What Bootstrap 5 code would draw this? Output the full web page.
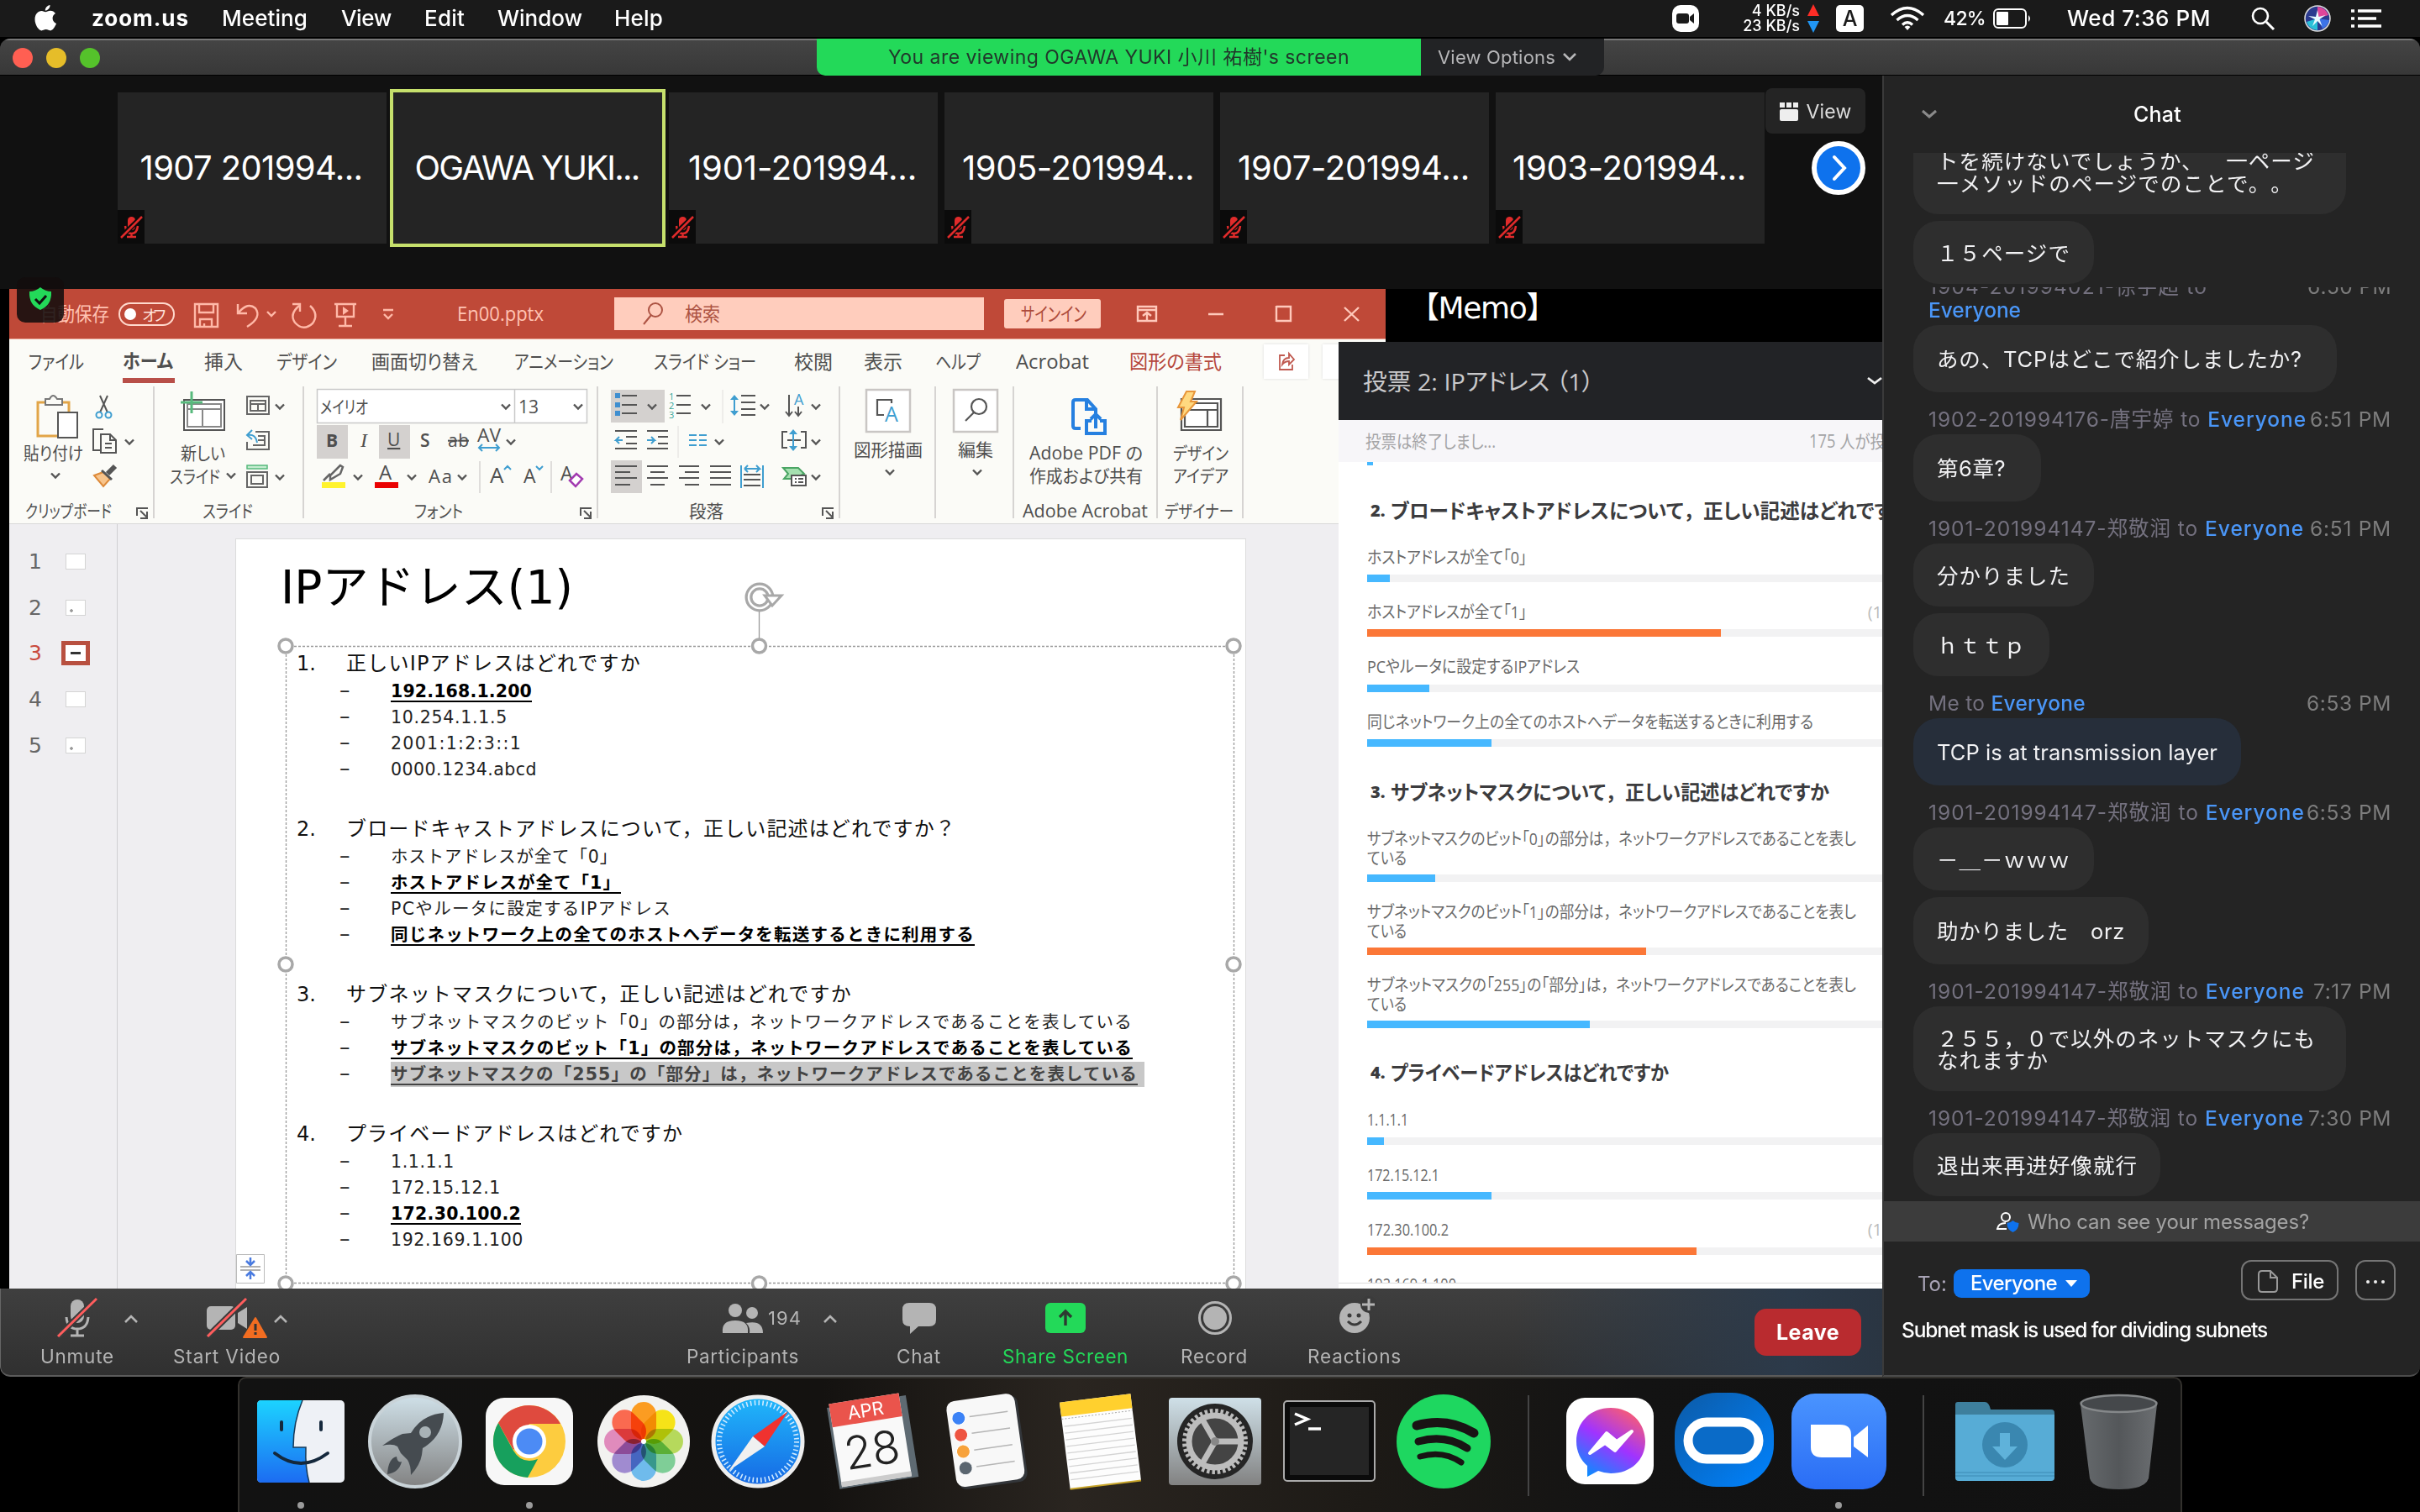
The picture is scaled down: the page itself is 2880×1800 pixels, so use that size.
<!DOCTYPE html>
<html lang="ja">
<head>
<meta charset="utf-8">
<title>Zoom Meeting</title>
<link rel="stylesheet" href="https://cdn.jsdelivr.net/npm/bootstrap@5.3.0/dist/css/bootstrap.min.css">
<style>
html,body{width:2880px;height:1800px;overflow:hidden}
body{background:#000;font-family:Inter,"Noto Sans CJK JP",sans-serif;font-size:25px;line-height:1;color:#fff;text-spacing-trim:space-all}
svg{display:block;overflow:visible}
[data-w]{display:inline-block;white-space:pre}
.squash{transform-origin:0 50%;font-feature-settings:"palt"}
.fullw{font-feature-settings:normal}
.grid-row{display:grid;align-items:center;white-space:nowrap}
/* menu bar */
.menu-bar{height:46px;background:#1a1a1a;border-bottom:2px solid #000;font-size:26px;font-weight:500;grid-template-columns:40px 69px 155px 142px 99px 87px 139px 1259px 46px 114px 35px 64px 64px 59px 88px 219px 63px 56px 40px}
.net-rate{font-size:18px;line-height:18px;text-align:right;width:106px}
.pct{font-size:23px}
/* window */
.zoom-window{height:1593px;background:#111;border-radius:12px 12px 12px 12px;overflow:hidden}
.title-strip{height:44px;background:linear-gradient(#444,#383838);border-top:2px solid #777;border-bottom:1px solid #000}
.lights{width:134px;padding-left:15px;gap:16px}
.lights i{width:24px;height:24px;border-radius:50%}
.share-info{width:719px;height:44px;margin:-2px 0 0 838px;background:#23d959;color:#21372b;font-size:23px;border-bottom-left-radius:10px}
.share-opt{width:218px;height:44px;margin-top:-2px;background:#222325;color:#b6b6b8;font-size:22px;border-bottom-right-radius:10px}
.stage-col{width:2240px}
.gallery{height:254px;background:#111;padding:20px 20px 0 140px}
.tile{width:320px;height:180px;background:#242424;font-size:40px;margin-right:8px;position:relative;flex:none}
.tile.talking{outline:4px solid #c6e06c;outline-offset:0}
.tile span{margin-left:-2px}
.tile svg{position:absolute;left:0;bottom:0;background:#0b0b0b}
.gallery-side{margin-left:-7px;margin-top:-5px;width:119px}
.view-btn{height:54px;background:#242424;border-radius:8px;color:#dcdcdc;font-size:23px;gap:10px;padding-top:2px}
.next-btn{width:64px;height:64px;border:6px solid #fff;border-radius:50%;background:#0e72ed;margin:9px 0 0 55px}
/* shared screen */
.shared{height:1190px;background:#000;padding-left:11px;position:relative}
.ppt{width:1638px;height:1190px;flex:none;font-family:"Open Sans","Noto Sans CJK JP",sans-serif;color:#4f4f4f}
.ppt-title{height:60px;background:#bf4938;border-bottom:1px solid #e9a393;color:#ffc3b3;font-size:23px;grid-template-columns:37px 93px 75px 328px 187px 464px 145px 1fr}
.switch{width:67px;height:28px;border:2px solid #ffd9cd;border-radius:14px;padding:0 9px 0 5px}
.switch i{width:14px;height:14px;border-radius:50%;background:#fff}
.switch b{font:400 18px "Noto Sans CJK JP";line-height:22px;color:#ffe4dc;letter-spacing:-6px;margin-right:4px}
.find-box{width:440px;height:39px;background:#ffcdbd;color:#ad5343;padding-left:34px;gap:26px}
.signin{width:115px;height:35px;background:#ffcdbd;color:#ad4b3b;border-radius:3px}
.tabs-row{height:56px;background:#fbfbf7;font-size:23px;grid-template-columns:23px 112px 97px 86px 113px 170px 166px 167px 83px 85px 96px 135px 160px 70px 1fr;padding-bottom:4px}
.tab-on{font-weight:700;border-bottom:6px solid #b84f48;height:52px;width:62px;display:flex;align-items:center;padding-top:5px}
.shape-tab{color:#b5473c}
.share-tab{width:53px;height:41px;background:#fff;box-shadow:0 0 3px #ddd;display:grid;place-items:center}
.ribbon{height:164px;background:#fbfbf7;border-bottom:1px solid #d8d8d8;font-size:21px}
.rgroup{border-right:2px solid #d6d4d2;height:157px;flex:none}
.rgroup .cap{height:26px;margin-top:6px;position:relative}
.rgroup text{fill:#4f4f4f;font-size:21px;font-feature-settings:"palt"}
.gc1{width:173px}.gc2{width:178px}.gc3{width:350px}.gc4{width:288px}.gc5{width:114px}.gc6{width:93px}.gc7{width:171px}.gc8{width:102px}
.cap .in1{margin-left:19px}.cap .in2{margin-left:57px}.cap .in3{margin-left:131px}.cap .in4{margin-left:108px}.cap .in7{margin-left:10px}.cap .in8{margin-left:8px}
.launcher{position:absolute;right:5px;top:6px}
.work{height:910px;background:#efeef1}
.thumbs{width:129px;border-right:1px solid #cfcfd2;padding:17px 0 0 23px;font:25px "DejaVu Sans";color:#666}
.thumb{height:54.8px;gap:28px}
.thumb i{width:24px;height:19px;background:#fff;border:1px solid #d4d4d4}
.thumb.dots i{background:radial-gradient(circle at 6px 12px,#999 1.500px,transparent 2px) #fff}
.thumb.sel{color:#c9493d}
.thumb.sel i{outline:5px solid #b85040;outline-offset:0;border:0;background:linear-gradient(#333,#333) center/12px 3px no-repeat #fff}
.slide{width:1203px;margin-left:140px;margin-top:17px;height:893px;background:#fff;border:1px solid #dcdcdc;border-bottom:0;position:relative;font-family:"DejaVu Sans","Noto Sans CJK JP",sans-serif;color:#111;overflow:hidden}
.slide h1{font-size:55px;margin:0;padding:24px 0 0 53px;height:130px;line-height:66px;font-weight:400;color:#000}
.slide .q{font-size:24px;line-height:36px;height:36px;padding-left:72px}
.slide .q span:first-child{display:inline-block;width:59px}
.slide .a{font-size:20.5px;line-height:31px;height:31px;padding-left:123px;color:#222}
.slide .a>i{font-style:normal;display:inline-block;width:61px;font-size:25px;line-height:28px;vertical-align:top}
.slide section{margin-bottom:37px}
.slide u{font-weight:700;color:#000;text-underline-offset:4px;text-decoration-thickness:2px}
.slide .hl{background:#c8c8c8;padding-right:8px;line-height:30px}
.slide .hl u{color:#444}
.frame{position:absolute;left:-1px;top:-1px}
.fit-btn{position:absolute;left:0;bottom:6px}
.guard{position:absolute;left:20px;top:-14px}
/* poll */
.memo{font:36px "DejaVu Sans","Noto Sans CJK JP";line-height:46px;height:63px;color:#fff;position:absolute;left:1677px;top:0;width:400px;overflow:hidden}
.poll{position:absolute;left:1593px;top:63px;width:647px;height:1127px;background:#fff;overflow:hidden;font-family:"Open Sans","Noto Sans CJK JP",sans-serif;color:#6a6a6a;white-space:nowrap}
.poll-head{height:93px;background:#222326;color:#c9c9cb;font-size:28px;padding:0 2px 0 29px}
.poll-sub{height:50px;background:#f7f6f9;color:#a4a4a6;font-size:21px;padding-left:32px;gap:373px}
.poll-body{padding-left:34px;height:978px;overflow:hidden;border-bottom:1px solid #ddd}
.peek{width:7px;height:4px;background:#46b8ff;margin-bottom:23.500px}
.poll h2{margin:0;height:74px;line-height:60px;font-size:24px;font-weight:700;color:#3c3c3e;padding-left:4px;display:grid;grid-template-columns:24px 1fr}
.poll h2 b{font-size:20px}
.opt{margin-bottom:23.850px;font-size:20px;line-height:23px}
.opt .rowl{padding-bottom:9.5px;height:32.5px}
.opt.two .rowl{height:54px}
.opt .n{color:#bbb}
.opt .progress{height:9px;border-radius:0;background:#f2f2f3}
.opt .progress-bar{background:#46b8ff}
.opt .hit{background:#fb7737}
/* toolbar */
.ctl-bar{height:105px;background:linear-gradient(90deg,transparent 1800px,#2c3a4a 2130px,#2a3542),linear-gradient(#3f3f3f,#303030);border-bottom:2px solid #5b5b5b;border-left:1px solid #666;color:#b4b4b4;font-size:22.5px;border-bottom-left-radius:12px}
.ctl{display:flex;flex-direction:column;height:103px;padding-top:12px}
.ctl svg{height:46px;margin-bottom:12px}
.c1{margin-left:47px;width:158px}.c2{width:611px}.c3{width:250px}.c4{width:126px}.c5{width:212px;color:#23d959}.c6{width:151px}.c7{width:532px}
.leave{width:127px;height:56px;background:#b92b2f;border-radius:14px;font-size:25px;font-weight:700;color:#fff;padding-top:2px}
/* chat */
.chat{width:640px;background:#242424;border-left:2px solid #3a3a3a;position:relative;height:1549px;padding-left:35px;border-bottom:2px solid #4b4b4b;border-bottom-right-radius:12px}
.chat-head{height:92px;font-size:25px;font-weight:500;padding-left:10px}
.chat-head .t{margin-left:234px}
.chat-list{height:1248px;overflow:hidden;font-size:25.5px}
.bub{background:#2e2e2e;border-radius:30px;padding:3px 0 0 28px;display:flex;align-items:center;line-height:26.5px;color:#f2f2f4}
.bub.me{background:#262e3a}
.bub.cut{height:73px;border-radius:0 0 30px 30px;align-items:flex-start;padding-top:0;overflow:hidden}
.bub.cut div{margin-top:-3px}
.h75{height:75px}.h80{height:80px}.h101{height:101px}
.w152{width:152px}.w162{width:162px}.w215{width:215px}.w280{width:280px}.w294{width:294px}.w390{width:390px}.w504{width:504px}.w515{width:515px}
.g8{margin-top:8px}
.who{height:50px;padding:0 34px 4px 18px;line-height:28px;color:#74717f;font-size:24.5px}
.who em{font-style:normal;color:#4a96f7;font-weight:500}
.who time{color:#7d7d7d}
.who.clip{height:49px;overflow:hidden;align-items:flex-start!important;padding-bottom:0;border-top:4px solid #242424}
.who.clip>*{margin-top:-15px}
.privacy{height:48px;margin-left:-35px;background:#3c3c3c;color:#a3a3a3;font-size:24px;gap:10px;padding:2px 0 0 2px}
.to-row{height:49px;margin-top:22px;padding-right:27px}
.to-row .to{width:43px;margin-left:5px;color:#a9a4b6;font-size:24px;padding-top:8px}
.to-row .ev{width:162px;height:34px;background:#0e72ed;border-radius:9px;font-size:24px;margin-top:11px;font-weight:500;gap:10px;padding:0 15px 0 20px}
.to-row .ghost{border:2px solid #757575;border-radius:12px;height:48px;padding-top:3px!important}
.to-row .file{width:116px;margin-left:180px;font-size:24px;font-weight:500;padding:0 15px 0 18px}
.to-row .more{width:48px;margin-left:20px}
.typed{margin:20px 0 0 -14px;font-size:24.5px;line-height:28px;font-weight:500}
/* dock */
.dock{width:2314px;height:161px;margin-left:283px;background:linear-gradient(90deg,#121212,#141210 30%,#2a2520 43%,#1d1a16 58%,#131313 72%,#111);border:2px solid #33312d;border-bottom:0;border-radius:10px 10px 0 0;padding-left:5px}
.slot{width:136px;height:160px;flex:none;margin-top:-1px}
.petals rect{mix-blend-mode:multiply}
.petals{isolation:isolate}
.sep{width:62px;flex:none;display:grid;place-items:center;padding-left:3px}
.sep i{width:2px;height:120px;background:#444}
</style>
</head>
<body>
<svg width="0" height="0" class="position-absolute">
<symbol id="muted" viewBox="0 0 32 40"><rect x="12" y="8" width="9" height="16" rx="4.5" fill="#e02b2b"/><path d="M9 19q1 9 7.500 9t7.500-9M16.500 28v3M11 32h11" stroke="#e02b2b" stroke-width="2.500" fill="none"/><path d="M3 33 29 8" stroke="#0b0b0b" stroke-width="6"/><path d="M4 33 29 8" stroke="#e02b2b" stroke-width="2.500"/></symbol>
<symbol id="launch" viewBox="0 0 15 14"><path d="M1 10V1h13M5 4l8 8M13 5v8H5" fill="none" stroke="#555" stroke-width="2"/></symbol>
<g id="cv"><path d="M-5-2.500 0 2.500 5-2.500" fill="none" stroke="#555" stroke-width="2.400"/></g>
<linearGradient id="gf" x2="0" y2="1"><stop stop-color="#1cd3ff"/><stop offset="1" stop-color="#1c6cf2"/></linearGradient>
<linearGradient id="gg" x2="0" y2="1"><stop stop-color="#cfe0e8"/><stop offset="1" stop-color="#828282"/></linearGradient>
<linearGradient id="gs" x2="0" y2="1"><stop stop-color="#20b8fb"/><stop offset="1" stop-color="#1668e4"/></linearGradient>
<linearGradient id="gz" x2="0" y2="1"><stop stop-color="#4a94ff"/><stop offset="1" stop-color="#2a6df5"/></linearGradient>
<linearGradient id="gm" x1=".2" y1="1" x2=".8" y2="0"><stop stop-color="#0a8cff"/><stop offset=".5" stop-color="#a033ff"/><stop offset="1" stop-color="#ff5f6b"/></linearGradient>
<linearGradient id="go" x1="0" y1="0" x2="1" y2="1"><stop stop-color="#0c5aa6"/><stop offset="1" stop-color="#0083ff"/></linearGradient>
<linearGradient id="gt" x2="1" y2="0"><stop stop-color="#666a6d"/><stop offset=".5" stop-color="#54575a"/><stop offset="1" stop-color="#6b6e71"/></linearGradient>
</svg>

<nav class="menu-bar grid-row">
<span></span>
<svg width="28" height="34" viewBox="0 0 28 34"><path d="M19.500 1c.4 3-2.600 6.700-5.700 6.600C13.500 4.700 16.500 1.400 19.500 1zM14.200 9.300c1.500 0 3-1.500 5.800-1.500 2.300 0 4.600 1.200 6 3.300-5 3-4.300 9.800 1 12-1.400 3.700-4.200 8.300-7 8.300-2 0-2.700-1.300-5.300-1.300s-3.400 1.300-5.200 1.300C6 31.400 1.500 24.500 1.500 18c0-6.300 4-10 8-10 2 0 3.500 1.300 4.700 1.300z" fill="#fff"/></svg>
<b data-w="116">zoom.us</b><span data-w="102">Meeting</span><span data-w="60">View</span><span data-w="48">Edit</span><span data-w="101">Window</span><span data-w="58">Help</span>
<svg width="32" height="32" viewBox="0 0 32 32"><rect width="32" height="32" rx="10" fill="#fff"/><rect x="5" y="10" width="15" height="12" rx="3" fill="#1a1a1a"/><path d="M21 14l5-4v12l-5-4z" fill="#1a1a1a"/></svg>
<div class="net-rate"><div>4 KB/s</div><div>23 KB/s</div></div>
<svg width="16" height="36" viewBox="0 0 16 36"><path d="M8 1 15 15H1z" fill="#ff2d26"/><path d="M8 35 15 21H1z" fill="#2196f3"/></svg>
<svg width="33" height="32" viewBox="0 0 33 32"><rect width="33" height="32" rx="5" fill="#fff"/><text x="16.500" y="25" font-size="25" text-anchor="middle" fill="#1a1a1a">A</text></svg>
<svg width="42" height="30" viewBox="0 0 42 30"><g fill="none" stroke="#fff" stroke-width="3.400"><path d="M2 11q19-17 38 0M8.500 17q12.500-11 25 0M15 22.500q6-5.500 12 0"/></g><path d="M17.500 25q3.500-3 7 0L21 29z" fill="#fff"/></svg>
<span data-w="50" class="pct">42%</span>
<svg width="46" height="24" viewBox="0 0 46 24"><rect x="1" y="1" width="38" height="22" rx="5" fill="none" stroke="#fff" stroke-width="2"/><rect x="4" y="4" width="14" height="16" rx="1" fill="#fff"/><path d="M42 8q4 4 0 8z" fill="#fff"/></svg>
<span data-w="171">Wed 7:36 PM</span>
<svg width="28" height="28" viewBox="0 0 28 28"><circle cx="11" cy="11" r="9" fill="none" stroke="#fff" stroke-width="2.600"/><path d="M18 18l9 9" stroke="#fff" stroke-width="3"/></svg>
<svg width="32" height="32" viewBox="0 0 32 32"><circle cx="16" cy="16" r="15" fill="#2b3a8f" stroke="#ddd" stroke-width="1.500"/><path d="M16 2a14 14 0 0 1 13 10L16 16z" fill="#e0469a"/><path d="M3 20a14 14 0 0 0 13 10V16z" fill="#29c0d8"/><path d="M16 16 30 18a14 14 0 0 1-8 10z" fill="#3c73e8"/><path d="M16 6l1.500 8 8-2-7 5 3 8-5.500-6-6 6 3-8-8-4 9 1z" fill="#e9fbff"/></svg>
<svg width="36" height="22" viewBox="0 0 36 22"><path d="M8 2h28M8 11h22M8 20h28M0 2h4M0 11h4M0 20h4" stroke="#fff" stroke-width="3.400"/></svg>
</nav>

<main class="zoom-window">
<header class="title-strip d-flex">
<div class="lights d-flex align-items-center"><i style="background:#ff5f52"></i><i style="background:#e6bd29"></i><i style="background:#55c22b"></i></div>
<div class="share-info d-flex align-items-center justify-content-center"><span data-w="549">You are viewing OGAWA YUKI 小川 祐樹's screen</span></div>
<div class="share-opt d-flex align-items-center ps-3"><span data-w="140" class="ms-1">View Options</span><svg width="18" height="12" viewBox="0 0 18 12" class="ms-2"><path d="M2 2l7 7 7-7" fill="none" stroke="#b6b6b8" stroke-width="2.600"/></svg></div>
</header>
<div class="d-flex">
<div class="stage-col">
<div class="gallery d-flex">
<div class="tile d-flex align-items-center justify-content-center"><span data-w="265">1907 201994...</span><svg width="32" height="40"><use href="#muted"/></svg></div>
<div class="tile talking d-flex align-items-center justify-content-center"><span data-w="267">OGAWA YUKI...</span></div>
<div class="tile d-flex align-items-center justify-content-center"><span data-w="272">1901-201994...</span><svg width="32" height="40"><use href="#muted"/></svg></div>
<div class="tile d-flex align-items-center justify-content-center"><span data-w="276">1905-201994...</span><svg width="32" height="40"><use href="#muted"/></svg></div>
<div class="tile d-flex align-items-center justify-content-center"><span data-w="276">1907-201994...</span><svg width="32" height="40"><use href="#muted"/></svg></div>
<div class="tile d-flex align-items-center justify-content-center"><span data-w="278">1903-201994...</span><svg width="32" height="40"><use href="#muted"/></svg></div>
<div class="gallery-side position-relative">
<div class="view-btn d-flex align-items-center justify-content-center"><svg width="22" height="22" viewBox="0 0 22 22"><path d="M0 0h6v6H0zM8 0h6v6H8zM16 0h6v6h-6z" fill="#eee"/><rect y="8" width="22" height="14" rx="2" fill="#eee"/></svg><span data-w="54">View</span></div>
<div class="next-btn d-grid"><svg width="52" height="52" viewBox="0 0 52 52"><path d="M21 13l12 13-12 13" fill="none" stroke="#fff" stroke-width="4" stroke-linecap="round"/></svg></div>
</div>
</div>

<div class="shared d-flex">
<div class="ppt">
<div class="ppt-title grid-row">
<span></span><span class="squash" data-w="82">自動保存</span>
<div class="switch d-flex align-items-center justify-content-between"><i></i><b>オフ</b></div>
<svg width="250" height="40" viewBox="216 354 250 40"><g fill="none" stroke="#ffb9a8" stroke-width="2.400"><path d="M232 362h27v27h-27zM237 362v10h17v-10M238 389v-9h14v9M243 389v-4"/><path d="M283 362v11h11M284 372q11-13 20-5 8 11-10 22"/><path d="M318 371l5 5 5-5"/><path d="M356 364q-12 10-5 20 10 11 21 1 8-11-3-21M348 362h9v9"/><path d="M398 362h26M401 363v14h20v-14M411 378v9M403 388h16"/><path d="M456 369h12M457 374l5 5 5-5"/></g><path d="M408 365l7 5-7 5z" fill="#ffb9a8"/></svg>
<span data-w="103" class="squash">En00.pptx</span>
<div class="find-box d-flex align-items-center"><svg width="24" height="28" viewBox="0 0 24 28"><circle cx="15" cy="9" r="8" fill="none" stroke="#ad5343" stroke-width="2"/><path d="M10 15 1 26" stroke="#ad5343" stroke-width="2"/></svg><span class="squash" data-w="42">検索</span></div>
<div class="signin d-flex align-items-center ps-3"><span class="squash ms-1" data-w="78">サインイン</span></div>
<svg width="290" height="30" viewBox="1341 359 290 30"><g fill="none" stroke="#ffc9bb" stroke-width="2.400"><path d="M1355 365h22v17h-22zM1355 369h22M1366 381v-8M1361 376l5-4 5 4"/><path d="M1439 374h18M1520 365h17v17h-17M1520 364v19M1601 366l17 16M1618 366l-17 16"/></g></svg>
</div>
<div class="tabs-row grid-row">
<span></span><span><span class="squash" data-w="66">ファイル</span></span><span class="tab-on"><span class="squash" data-w="60">ホーム</span></span><span class="squash" data-w="46">挿入</span><span class="squash" data-w="72">デザイン</span><span class="squash" data-w="126">画面切り替え</span><span class="squash" data-w="118">アニメーション</span><span class="squash" data-w="122">スライド ショー</span><span class="squash" data-w="46">校閲</span><span class="squash" data-w="46">表示</span><span class="squash" data-w="54">ヘルプ</span><span class="squash" data-w="87">Acrobat</span><span class="squash shape-tab" data-w="110">図形の書式</span>
<div class="share-tab"><svg width="20" height="22" viewBox="0 0 20 22"><path d="M8 4H2v17h15v-6M5 15Q6 7 13 7V2l6 7-6 6v-4q-5 0-8 4z" fill="none" stroke="#c05a50" stroke-width="1.800"/></svg></div><div class="share-tab"></div>
</div>
<div class="ribbon d-flex">
<div class="rgroup gc1"><svg width="171" height="132" viewBox="11 460 171 132"><path d="M45 479h37v40H45z" fill="none" stroke="#e2a548" stroke-width="3"/><path d="M54 482v-7h5q4-8 9 0h6v7z" fill="#fbfbf7" stroke="#777" stroke-width="2"/><path d="M69 491h23v30H69z" fill="#fff" stroke="#555" stroke-width="2"/><path d="M119 471l9 20M128 471l-9 20" stroke="#555" stroke-width="2"/><g fill="none" stroke="#3f9ed0" stroke-width="2"><circle cx="118" cy="494" r="3.500"/><circle cx="129" cy="494" r="3.500"/></g><path d="M123 511h-12v25h8M120 517h11l7 7v15h-18zM131 517v7h7M125 528h8M125 533h8" fill="none" stroke="#555" stroke-width="2"/><path d="M137 555l-9 9" stroke="#555" stroke-width="6"/><path d="M112 566l11-4 8 8-8 9z" fill="#f8c48b" stroke="#dd8a3a" stroke-width="2"/><path d="M121 560l12 11" stroke="#555" stroke-width="3"/><use href="#cv" x="154" y="526"/><use href="#cv" x="66" y="566"/><text x="28" y="547" textLength="71" lengthAdjust="spacingAndGlyphs">貼り付け</text></svg><div class="cap"><span class="squash in1" data-w="103">クリップボード</span><svg class="launcher" width="15" height="14"><use href="#launch"/></svg></div></div>
<div class="rgroup gc2"><svg width="176" height="132" viewBox="184 460 176 132"><path d="M219 476h48v36h-48z" fill="#fff" stroke="#555" stroke-width="2"/><path d="M223 481h40v27h-40zM223 487h40M241 487v21" fill="none" stroke="#888" stroke-width="2"/><path d="M228 466v26M215 479h26" stroke="#57b97c" stroke-width="3"/><g fill="none" stroke="#666" stroke-width="2"><path d="M294 472h26v21h-26zM298 477h18v12h-18zM298 481h18M307 481v8"/><path d="M304 514h16v21h-26v-9M301 530h14v-11h-8M307 524h8"/><path d="M294 562h24v18h-24zM299 566h14v10h-14z"/></g><path d="M294 554h24v4h-24z" fill="#c5ecd0" stroke="#57b97c" stroke-width="1.500"/><path d="M295 518q9-2 11 9M300 512l-6 6 6 5" fill="none" stroke="#3f9ed0" stroke-width="2"/><use href="#cv" x="333" y="484"/><use href="#cv" x="333" y="568"/><use href="#cv" x="275" y="566"/><text x="215" y="547" textLength="53" lengthAdjust="spacingAndGlyphs">新しい</text><text x="202" y="575" textLength="60" lengthAdjust="spacingAndGlyphs">スライド</text></svg><div class="cap"><span class="squash in2" data-w="60">スライド</span></div></div>
<div class="rgroup gc3"><svg width="348" height="132" viewBox="362 460 348 132"><path d="M377.500 463.500h321v40h-321zM612.500 463v40" fill="#fff" stroke="#c9c9c9" stroke-width="1.500"/><text x="381" y="492" textLength="57" lengthAdjust="spacingAndGlyphs">メイリオ</text><text x="617" y="492" textLength="24" lengthAdjust="spacingAndGlyphs">13</text><use href="#cv" x="602" y="484"/><use href="#cv" x="688" y="484"/><path d="M377 506h37v40h-37zM451 506h37v40h-37z" fill="#d4d1cf"/><text x="388" y="532" font-weight="700">B</text><text x="429" y="532" font-style="italic" font-family="Liberation Serif" style="font-size:24px">I</text><text x="461" y="531" text-decoration="underline">U</text><text x="500" y="532" font-weight="600">S</text><text x="533" y="532" textLength="25" text-decoration="line-through">ab</text><text x="568" y="526" textLength="28" lengthAdjust="spacingAndGlyphs">AV</text><path d="M570 533h24M574 529l-4 4 4 4M590 529l4 4-4 4" fill="none" stroke="#3f9ed0" stroke-width="2"/><use href="#cv" x="608" y="526"/><path d="M383 574h28v7h-28z" fill="#fff32e"/><path d="M405 554l-12 12v5l12-7 3-8zM393 564l-8 8" fill="#fbfbf7" stroke="#666" stroke-width="2.500"/><use href="#cv" x="426" y="568"/><text x="451" y="571" style="font-size:24px">A</text><path d="M446 574h28v7h-28z" fill="#ea0202"/><use href="#cv" x="490" y="568"/><text x="510" y="575" style="font-size:22px" textLength="28">Aa</text><use href="#cv" x="550" y="568"/><path d="M571 549v38M656 549v38" stroke="#d6d4d2" stroke-width="1.500"/><text x="583" y="575" style="font-size:26px">A</text><text x="623" y="575" style="font-size:23px">A</text><text x="667" y="572" style="font-size:23px">A</text><path d="M600 559l4-4 4 4M638 555l4 4 4-4" fill="none" stroke="#3f9ed0" stroke-width="2"/><path d="M678 572l8-8 7 6-8 9z" fill="#fff" stroke="#a23bb0" stroke-width="2.500"/></svg><div class="cap"><span class="squash in3" data-w="58">フォント</span><svg class="launcher" width="15" height="14"><use href="#launch"/></svg></div></div>
<div class="rgroup gc4"><svg width="286" height="132" viewBox="712 460 286 132"><path d="M727 464h64v39h-64zM727 548h37v39h-37z" fill="#d4d1cf"/><g stroke="#555" stroke-width="2" fill="none"><path d="M740 471h18M740 482h18M740 492h18M805 471h17M805 482h17M805 492h17M882 471h17M882 479h17M882 487h17M882 494h17M939 470v24M935 490l4 5 4-5M950 484v11M946 490l4 5 4-5"/><path d="M732 513h26M745 520h13M745 528h13M732 534h26M770 513h25M783 520h12M783 528h12M770 534h25"/><path d="M732 555h26M732 562h18M732 569h26M732 577h18M770 555h25M774 562h17M770 569h25M774 577h17M808 555h24M815 562h17M808 569h24M815 577h17M845 555h25M845 562h25M845 569h25M845 577h25M885 565h20M885 571h20M885 578h20"/><path d="M937 514h-6v19h6M953 514h6v19h-6M937 524h16"/></g><path d="M732 468h6v6h-6zM732 479h6v6h-6zM732 489h6v6h-6z" fill="#3f8fd0"/><path d="M874 470l5 6h-10zM874 495l5-6h-10zM944 511l5 6h-10zM944 537l5-6h-10z" fill="#3f9ed0"/><path d="M874 473v20M944 515v20M741 524h-8l4-4M733 524l4 4M770 524h9l-4-4M779 524l-4 4M820 518h9M820 524h9M820 530h9M832 518h9M832 524h9M832 530h9M882 554v27M908 554v27M886 558h18l-4-4M904 558l-4 4M886 558l4-4M886 558l4 4" fill="none" stroke="#3f9ed0" stroke-width="2"/><text x="796" y="476" style="font-size:11px;fill:#3aa79a">1</text><text x="796" y="487" style="font-size:11px;fill:#3aa79a">2</text><text x="796" y="498" style="font-size:11px;fill:#3aa79a">3</text><text x="945" y="482" style="font-size:18px;fill:#3f9ed0">A</text><path d="M932 557h18l7 7-12 6h-12l5-6z" fill="#a5e0b0" stroke="#4aa564" stroke-width="2"/><path d="M942 566h17v12h-17zM946 570h2M950 570h6M946 574h2M950 574h6" fill="#fff" stroke="#555" stroke-width="2"/><use href="#cv" x="776" y="484"/><use href="#cv" x="840" y="484"/><use href="#cv" x="910" y="484"/><use href="#cv" x="971" y="484"/><use href="#cv" x="856" y="526"/><use href="#cv" x="971" y="526"/><use href="#cv" x="971" y="568"/><path d="M860 464v40M807 507v38" stroke="#e0dedc"/></svg><div class="cap"><span class="squash in4" data-w="41">段落</span><svg class="launcher" width="15" height="14"><use href="#launch"/></svg></div></div>
<div class="rgroup gc5"><svg width="112" height="132" viewBox="1000 460 112 132"><path d="M1031 464h52v50h-52z" fill="#fff" stroke="#c9c6c4" stroke-width="2.500"/><path d="M1061 480v-4h-17v18h8" fill="none" stroke="#555" stroke-width="2.200"/><text x="1053" y="502" style="font-size:25px;fill:#3f9ed0">A</text><text x="1016" y="543" textLength="82" lengthAdjust="spacingAndGlyphs">図形描画</text><use href="#cv" x="1059" y="562"/></svg></div>
<div class="rgroup gc6"><svg width="91" height="132" viewBox="1114 460 91 132"><path d="M1135 464h52v50h-52z" fill="#fff" stroke="#c9c6c4" stroke-width="2.500"/><circle cx="1165" cy="484" r="9" fill="none" stroke="#555" stroke-width="2.200"/><path d="M1159 491l-10 10" stroke="#555" stroke-width="2.200"/><text x="1140" y="543" textLength="42" lengthAdjust="spacingAndGlyphs">編集</text><use href="#cv" x="1163" y="562"/></svg></div>
<div class="rgroup gc7"><svg width="169" height="132" viewBox="1207 460 169 132"><path d="M1286 510h-6q-3 0-3-3v-28q0-3 3-3h14l10 11v5M1293 476v11h11M1299 501h-6v15h22v-15h-6M1304 510v-16M1298 499l6-6 6 6" fill="none" stroke="#2680e0" stroke-width="4"/><text x="1225" y="547" textLength="135" lengthAdjust="spacingAndGlyphs">Adobe PDF の</text><text x="1225" y="574" textLength="135" lengthAdjust="spacingAndGlyphs">作成および共有</text></svg><div class="cap"><span class="squash in7" data-w="149">Adobe Acrobat</span></div></div>
<div class="rgroup gc8"><svg width="100" height="132" viewBox="1378 460 100 132"><path d="M1406 475h47v37h-47zM1410 480h39v28h-39zM1410 488h39M1437 488v20" fill="#fff" stroke="#555" stroke-width="2.200"/><path d="M1412 466h10l-5 12h7l-19 22 4-15h-7z" fill="#ffd980" stroke="#e8963a" stroke-width="2"/><text x="1396" y="547" textLength="66" lengthAdjust="spacingAndGlyphs">デザイン</text><text x="1396" y="574" textLength="66" lengthAdjust="spacingAndGlyphs">アイデア</text></svg><div class="cap"><span class="squash in8" data-w="82">デザイナー</span></div></div>
</div>
<div class="work d-flex">
<div class="thumbs"><div class="thumb d-flex align-items-center">1<i></i></div><div class="thumb dots d-flex align-items-center">2<i></i></div><div class="thumb sel d-flex align-items-center">3<i></i></div><div class="thumb d-flex align-items-center">4<i></i></div><div class="thumb dots d-flex align-items-center">5<i></i></div></div>
<article class="slide">
<h1><span data-w="348">IPアドレス(1)</span></h1>
<section><div class="q"><span>1.</span><span data-w="351">正しいIPアドレスはどれですか</span></div>
<div class="a"><i>–</i><u data-w="168">192.168.1.200</u></div><div class="a"><i>–</i><span data-w="139">10.254.1.1.5</span></div><div class="a"><i>–</i><span data-w="156">2001:1:2:3::1</span></div><div class="a"><i>–</i><span data-w="174">0000.1234.abcd</span></div></section>
<section><div class="q"><span>2.</span><span data-w="726">ブロードキャストアドレスについて，正しい記述はどれですか？</span></div>
<div class="a"><i>–</i><span data-w="270">ホストアドレスが全て「0」</span></div><div class="a"><i>–</i><u data-w="274">ホストアドレスが全て「1」</u></div><div class="a"><i>–</i><span data-w="334">PCやルータに設定するIPアドレス</span></div><div class="a"><i>–</i><u data-w="695">同じネットワーク上の全てのホストへデータを転送するときに利用する</u></div></section>
<section><div class="q"><span>3.</span><span data-w="602">サブネットマスクについて，正しい記述はどれですか</span></div>
<div class="a"><i>–</i><span data-w="883">サブネットマスクのビット「0」の部分は，ネットワークアドレスであることを表している</span></div><div class="a"><i>–</i><u data-w="883">サブネットマスクのビット「1」の部分は，ネットワークアドレスであることを表している</u></div><div class="a"><i>–</i><span class="hl d-inline-block"><u data-w="889">サブネットマスクの「255」の「部分」は，ネットワークアドレスであることを表している</u></span></div></section>
<section><div class="q"><span>4.</span><span data-w="401">プライベードアドレスはどれですか</span></div>
<div class="a"><i>–</i><span data-w="76">1.1.1.1</span></div><div class="a"><i>–</i><span data-w="131">172.15.12.1</span></div><div class="a"><i>–</i><u data-w="155">172.30.100.2</u></div><div class="a"><i>–</i><span data-w="158">192.169.1.100</span></div></section>
<svg class="frame" width="1203" height="893" viewBox="280 641 1203 893"><g fill="none" stroke="#999" stroke-width="1.300"><path d="M340 769.500h1128M340.500 769v759M1468.500 769v759M340 1527.500h1128" stroke-dasharray="3 2"/><path d="M903.500 728v32"/></g><g fill="#fff" stroke="#a8a8a8" stroke-width="3.500"><circle cx="340" cy="769" r="8"/><circle cx="903.500" cy="769" r="8"/><circle cx="1468" cy="769" r="8"/><circle cx="340" cy="1148" r="8"/><circle cx="1468" cy="1148" r="8"/><circle cx="340" cy="1528" r="8"/><circle cx="903.500" cy="1528" r="8"/><circle cx="1468" cy="1528" r="8"/></g><g fill="none" stroke="#a8a8a8"><circle cx="904" cy="711" r="13" stroke-width="9"/><circle cx="904" cy="711" r="13" stroke="#fff" stroke-width="2.500"/><path d="M910 709h20l-11 12z" fill="#fff" stroke-width="3"/></g></svg>
<svg class="fit-btn" width="34" height="35" viewBox="0 0 34 35"><path d="M.5.500h33v34H.5z" fill="#fff" stroke="#bbb"/><path d="M5 15h24M5 19h24" stroke="#999" stroke-width="1.500"/><path d="M17 4v8M12 8l5 5 5-5M17 30v-8M12 26l5-5 5 5" fill="none" stroke="#4a7be0" stroke-width="2.500"/></svg>
</article>
</div>
</div>
<div class="memo"><span data-w="174">【Memo】</span></div>
<div class="poll">
<div class="poll-head d-flex align-items-center justify-content-between"><span class="squash" data-w="275">投票 2: IPアドレス （1）</span><svg width="16" height="12" viewBox="0 0 16 12"><path d="M1 2l8 6 8-6" fill="none" stroke="#eee" stroke-width="2.800"/></svg></div>
<div class="poll-sub d-flex align-items-center"><span class="squash" data-w="155">投票は終了しまし...</span><span class="squash" data-w="109">175 人が投票</span></div>
<div class="poll-body">
<div class="peek"></div>
<h2><b>2.</b><span><span class="squash" data-w="620">ブロードキャストアドレスについて<span class="fullw">，</span>正しい記述はどれですか</span></span></h2>
<div class="opt"><div class="rowl"><span class="squash" data-w="190">ホストアドレスが全て「0」</span></div><div class="progress"><div class="progress-bar" style="width:27px"></div></div></div>
<div class="opt"><div class="rowl d-flex"><span class="squash" data-w="190">ホストアドレスが全て「1」</span><span class="n ms-auto">(1</span></div><div class="progress"><div class="progress-bar hit" style="width:421px"></div></div></div>
<div class="opt"><div class="rowl"><span class="squash" data-w="253">PCやルータに設定するIPアドレス</span></div><div class="progress"><div class="progress-bar" style="width:74px"></div></div></div>
<div class="opt"><div class="rowl"><span class="squash" data-w="531">同じネットワーク上の全てのホストへデータを転送するときに利用する</span></div><div class="progress"><div class="progress-bar" style="width:148px"></div></div></div>
<h2><b>3.</b><span><span class="squash" data-w="522">サブネットマスクについて<span class="fullw">，</span>正しい記述はどれですか</span></span></h2>
<div class="opt two"><div class="rowl"><span class="squash" data-w="582">サブネットマスクのビット「0」の部分は<span class="fullw">，</span>ネットワークアドレスであることを表し</span><br><span class="squash" data-w="47">ている</span></div><div class="progress"><div class="progress-bar" style="width:81px"></div></div></div>
<div class="opt two"><div class="rowl"><span class="squash" data-w="582">サブネットマスクのビット「1」の部分は<span class="fullw">，</span>ネットワークアドレスであることを表し</span><br><span class="squash" data-w="47">ている</span></div><div class="progress"><div class="progress-bar hit" style="width:332px"></div></div></div>
<div class="opt two"><div class="rowl"><span class="squash" data-w="582">サブネットマスクの「255」の「部分」は<span class="fullw">，</span>ネットワークアドレスであることを表し</span><br><span class="squash" data-w="47">ている</span></div><div class="progress"><div class="progress-bar" style="width:265px"></div></div></div>
<h2><b>4.</b><span><span class="squash" data-w="331">プライベードアドレスはどれですか</span></span></h2>
<div class="opt"><div class="rowl"><span class="squash" data-w="49">1.1.1.1</span></div><div class="progress"><div class="progress-bar" style="width:20px"></div></div></div>
<div class="opt"><div class="rowl"><span class="squash" data-w="86">172.15.12.1</span></div><div class="progress"><div class="progress-bar" style="width:148px"></div></div></div>
<div class="opt"><div class="rowl d-flex"><span class="squash" data-w="97">172.30.100.2</span><span class="n ms-auto">(1</span></div><div class="progress"><div class="progress-bar hit" style="width:392px"></div></div></div>
<div class="opt"><div class="rowl"><span class="squash" data-w="106">192.169.1.100</span></div></div>
</div>
</div>
<svg class="guard" width="56" height="56" viewBox="0 0 56 56"><rect y="0" width="56" height="54" rx="10" fill="#120d0c" fill-opacity=".88"/><path d="M28 12q6 5 13 5 1 16-13 22-14-6-13-22 7 0 13-5z" fill="#23d959"/><path d="M22 26l5 5 8-9" fill="none" stroke="#111" stroke-width="3"/></svg>
</div>

<div class="ctl-bar d-flex">
<div class="ctl c1"><svg width="90" viewBox="48 1546 90 46"><rect x="84" y="1547" width="16" height="28" rx="8" fill="#b4b4b4"/><path d="M79 1568q1 14 13 14t13-14M92 1582v8M84 1590h16" fill="none" stroke="#b4b4b4" stroke-width="3"/><path d="M69 1591l46-45" stroke="#3b3b3b" stroke-width="7"/><path d="M69 1591l46-45" stroke="#ff5d5d" stroke-width="3"/><path d="M149 1574l7-7 7 7" fill="none" stroke="#b4b4b4" stroke-width="2.600"/></svg><span data-w="88">Unmute</span></div>
<div class="ctl c2"><svg width="130" viewBox="206 1546 130 46"><rect x="246" y="1555" width="34" height="28" rx="5" fill="#b4b4b4"/><path d="M283 1563l11-7v26l-11-7z" fill="#b4b4b4"/><path d="M247 1591l46-45" stroke="#3b3b3b" stroke-width="7"/><path d="M247 1591l46-45" stroke="#ff5d5d" stroke-width="3"/><path d="M304 1569l13 23h-27z" fill="#f26d21" stroke="#f26d21" stroke-width="2" stroke-linejoin="round"/><path d="M304 1576v8M304 1586v3" stroke="#333" stroke-width="3"/><path d="M327 1574l7-7 7 7" fill="none" stroke="#b4b4b4" stroke-width="2.600"/></svg><span data-w="128">Start Video</span></div>
<div class="ctl c3"><svg width="180" viewBox="817 1546 180 46"><g fill="#b4b4b4"><circle cx="875" cy="1560" r="8"/><circle cx="895" cy="1563" r="7"/><path d="M860 1587q-2-15 15-15t15 15zM892 1587q1-7-4-12 20-4 20 12z"/><text x="914" y="1577" font-size="22" textLength="39">194</text></g><path d="M981 1574l7-7 7 7" fill="none" stroke="#b4b4b4" stroke-width="2.600"/></svg><span data-w="134">Participants</span></div>
<div class="ctl c4"><svg width="54" viewBox="1067 1546 54 46"><path d="M1082 1551h24q8 0 8 8v12q0 8-8 8h-13l-10 9v-9q-9 0-9-8v-12q0-8 8-8z" fill="#b4b4b4"/></svg><span data-w="53">Chat</span></div>
<div class="ctl c5"><svg width="150" viewBox="1193 1546 150 46"><rect x="1244" y="1551" width="48" height="36" rx="6" fill="#23d959"/><path d="M1268 1578v-15M1261 1568l7-7 7 7" fill="none" stroke="#2d3a31" stroke-width="3.400"/></svg><span data-w="150">Share Screen</span></div>
<div class="ctl c6"><svg width="80" viewBox="1405 1546 80 46"><circle cx="1446" cy="1569" r="18.500" fill="none" stroke="#b4b4b4" stroke-width="3"/><circle cx="1446" cy="1569" r="14" fill="#b4b4b4"/></svg><span data-w="80">Record</span></div>
<div class="ctl c7"><svg width="110" viewBox="1556 1546 110 46"><circle cx="1612" cy="1569" r="18" fill="#b4b4b4"/><circle cx="1629" cy="1553" r="10" fill="#3b3b3b"/><path d="M1629 1546v14M1621 1553h15" stroke="#b4b4b4" stroke-width="3"/><circle cx="1606" cy="1566" r="2.500" fill="#3b3b3b"/><circle cx="1617" cy="1566" r="2.500" fill="#3b3b3b"/><path d="M1604 1573q8 8 16 0" stroke="#3b3b3b" stroke-width="3" fill="none"/></svg><span data-w="112">Reactions</span></div>
<div class="leave d-flex align-items-center justify-content-center align-self-center"><span data-w="75">Leave</span></div>
</div>
</div>

<aside class="chat">
<div class="chat-head d-flex align-items-center"><svg width="18" height="12" viewBox="0 0 18 12"><path d="M1 2l8 7 8-7" fill="none" stroke="#8a8a8a" stroke-width="3"/></svg><span class="t" data-w="57">Chat</span></div>
<div class="chat-list">
<div class="bub cut w515"><div><span data-w="450">トを続けないでしょうか、　一ページ</span><br><span data-w="424">一メソッドのページでのことで。。</span></div></div>
<div class="bub h75 w215 g8 mt-2"><span data-w="159">１５ページで</span></div>
<div class="who clip d-flex justify-content-between"><span><span data-w="332">1904-201994021-徐宇超 to</span><br><em data-w="110">Everyone</em></span><time data-w="100">6:50 PM</time></div>
<div class="bub h80 w504"><span data-w="435">あの、TCPはどこで紹介しましたか?</span></div>
<div class="who d-flex align-items-end justify-content-between"><span data-w="450">1902-201994176-唐宇婷 to <em>Everyone</em></span><time data-w="97">6:51 PM</time></div>
<div class="bub h80 w152"><span data-w="82">第6章?</span></div>
<div class="who d-flex align-items-end justify-content-between"><span data-w="447">1901-201994147-郑敬润 to <em>Everyone</em></span><time data-w="97">6:51 PM</time></div>
<div class="bub h75 w215"><span data-w="159">分かりました</span></div>
<div class="bub h75 w162 g8"><span data-w="106">ｈｔｔｐ</span></div>
<div class="who d-flex align-items-end justify-content-between"><span data-w="187">Me to <em>Everyone</em></span><time data-w="101">6:53 PM</time></div>
<div class="bub me h80 w390"><span data-w="334">TCP is at transmission layer</span></div>
<div class="who d-flex align-items-end justify-content-between"><span data-w="448">1901-201994147-郑敬润 to <em>Everyone</em></span><time data-w="101">6:53 PM</time></div>
<div class="bub h75 w215"><span data-w="159">－＿－ｗｗｗ</span></div>
<div class="bub h80 w280 g8"><span data-w="224">助かりました　orz</span></div>
<div class="who d-flex align-items-end justify-content-between"><span data-w="448">1901-201994147-郑敬润 to <em>Everyone</em></span><time data-w="93">7:17 PM</time></div>
<div class="bub h101 w515"><div><span data-w="451">２５５，０で以外のネットマスクにも</span><br><span data-w="133">なれますか</span></div></div>
<div class="who d-flex align-items-end justify-content-between"><span data-w="447">1901-201994147-郑敬润 to <em>Everyone</em></span><time data-w="99">7:30 PM</time></div>
<div class="bub h75 w294"><span data-w="239">退出来再进好像就行</span></div>
</div>
<div class="privacy d-flex align-items-center justify-content-center"><svg width="27" height="24" viewBox="0 0 27 24"><circle cx="11" cy="6" r="5" fill="none" stroke="#fff" stroke-width="2"/><path d="M11 13Q2 13 1 20h11" fill="none" stroke="#fff" stroke-width="2"/><path d="M19.500 10q3 3 7 3 0 8-7 11-7-3-7-11 4 0 7-3z" fill="#0e72ed"/></svg><span data-w="335">Who can see your messages?</span></div>
<div class="to-row d-flex"><span class="to d-flex align-items-center">To:</span><span class="ev d-flex align-items-center"><span data-w="103">Everyone</span><svg width="14" height="8" viewBox="0 0 14 8"><path d="M0 0h14L7 8z" fill="#fff"/></svg></span>
<span class="ghost file d-flex align-items-center justify-content-between"><svg width="24" height="27" viewBox="0 0 24 27"><path d="M5 1h10l8 8v13q0 4-4 4H5q-4 0-4-4V5q0-4 4-4zM15 1v8h8" fill="none" stroke="#999" stroke-width="2"/></svg><span data-w="39">File</span></span>
<span class="ghost more d-flex align-items-center justify-content-center"><svg width="22" height="4" viewBox="0 0 22 4"><circle cx="2" cy="2" r="2" fill="#eee"/><circle cx="11" cy="2" r="2" fill="#eee"/><circle cx="20" cy="2" r="2" fill="#eee"/></svg></span></div>
<div class="typed"><span data-w="435">Subnet mask is used for dividing subnets</span></div>
</aside>
</div>
</main>

<footer class="dock d-flex">
<svg class="slot" viewBox="0 0 136 160"><rect x="16" y="27" width="104" height="98" rx="5" fill="#eef1f6"/><path d="M21 27h49q-11 26-11 56h15q-1 24 4 42H21q-5 0-5-5V32q0-5 5-5z" fill="url(#gf)"/><path d="M70 27q-11 26-11 56h15q-1 24 4 42" fill="none" stroke="#173a58" stroke-width="1.500"/><path d="M45 53v9M92 53v9" stroke="#14283c" stroke-width="4" stroke-linecap="round"/><path d="M37 90q31 24 63 0" fill="none" stroke="#14283c" stroke-width="4" stroke-linecap="round"/><circle cx="68" cy="152" r="4" fill="#9b9b9b"/></svg>
<svg class="slot" viewBox="0 0 136 160"><circle cx="68" cy="76" r="54" fill="url(#gg)" stroke="#c9d3d8" stroke-width="4"/><path d="M102 42q-26 2-39 24l-10 1q-10 4-24 14 12-3 18 1l4 8 8 8q4 6 4 18 11-12 13-24l1-8q24-14 25-42z" fill="#454b50"/><circle cx="80" cy="65" r="7" fill="#a8b2b6"/><path d="M46 94q-10 2-11 21 14-2 17-15-5 2-6-6z" fill="#454b50"/></svg>
<svg class="slot" viewBox="0 0 136 160"><rect x="16" y="24" width="104" height="104" rx="22" fill="#f7f7f7"/><circle cx="68" cy="76" r="43" fill="#fdcc3f"/><path d="M68 33a43 43 0 0 1 37 22H68L49 86 31 54a43 43 0 0 1 37-21z" fill="#df4a3e"/><path d="M31 54 49 87q7 12 19 12 4 0 10-2l-12 22A43 43 0 0 1 31 54z" fill="#17a05d"/><circle cx="68" cy="76" r="20" fill="#fff"/><circle cx="68" cy="76" r="15.500" fill="#4c8bf5"/><circle cx="68" cy="152" r="4" fill="#9b9b9b"/></svg>
<svg class="slot" viewBox="0 0 136 160"><circle cx="68" cy="76" r="55" fill="#f2f2f0"/><g class="petals" transform="translate(68 76)"><rect x="-15" y="-47" width="30" height="45" rx="15" fill="#fb9c22"/><rect x="-15" y="-47" width="30" height="45" rx="15" fill="#f6e318" transform="rotate(45)"/><rect x="-15" y="-47" width="30" height="45" rx="15" fill="#b6d95c" transform="rotate(90)"/><rect x="-15" y="-47" width="30" height="45" rx="15" fill="#7fce97" transform="rotate(135)"/><rect x="-15" y="-47" width="30" height="45" rx="15" fill="#6fbbec" transform="rotate(180)"/><rect x="-15" y="-47" width="30" height="45" rx="15" fill="#a08bd0" transform="rotate(225)"/><rect x="-15" y="-47" width="30" height="45" rx="15" fill="#e08bbc" transform="rotate(270)"/><rect x="-15" y="-47" width="30" height="45" rx="15" fill="#fa6a50" transform="rotate(315)"/></g><circle cx="68" cy="76" r="3" fill="#fff"/></svg>
<svg class="slot" viewBox="0 0 136 160"><circle cx="68" cy="76" r="53" fill="url(#gs)" stroke="#eee" stroke-width="5"/><circle cx="68" cy="76" r="46" fill="none" stroke="#cfeaff" stroke-width="6" stroke-dasharray="1.600 3.220"/><path d="M104 40 76 82 62 70z" fill="#f0322f"/><path d="M33 111 62 70 76 82z" fill="#f0f0f0"/></svg>
<svg class="slot" viewBox="0 0 136 160"><g transform="rotate(-9 68 76)"><rect x="21" y="28" width="95" height="98" fill="#5e6a72"/><path d="M24 24h84v100H24z" fill="#f9f9f9"/><path d="M24 24h84v28H24z" fill="#ea544c"/><text x="66" y="46" text-anchor="middle" font-size="22" fill="#fff">APR</text><text x="66" y="105" text-anchor="middle" font-size="54" font-weight="300" fill="#222">28</text><path d="M24 118h84v6H24z" fill="#ccc"/></g></svg>
<svg class="slot" viewBox="0 0 136 160"><g transform="rotate(-8 68 76)"><rect x="28" y="25" width="83" height="104" rx="10" fill="#33363a"/><rect x="26" y="23" width="82" height="103" rx="10" fill="#f8f8f8"/><g stroke="#fff"><circle cx="39" cy="44" r="8" fill="#3b82f6"/><circle cx="39" cy="64" r="8" fill="#ee5441"/><circle cx="39" cy="84" r="8" fill="#f7a23b"/><circle cx="39" cy="104" r="8" fill="#5b6670"/></g><path d="M52 44h46M52 64h46M52 84h46M52 104h46" stroke="#b5b5b5" stroke-width="1.500"/></g></svg>
<svg class="slot" viewBox="0 0 136 160"><g transform="rotate(-7 68 76)"><path d="M25 24h85v104H25z" fill="#fdfdfd"/><path d="M25 24h85v17H25z" fill="#ffd02e"/><path d="M25 44h85" stroke="#aaa" stroke-dasharray="2 2"/><path d="M27 53h81M27 61h81M27 69h81M27 77h81M27 85h81M27 93h81M27 101h81M27 109h81M27 117h81" stroke="#d4d4d4" stroke-width="1.300"/><path d="M25 128h85" stroke="#c7a429" stroke-width="2"/></g></svg>
<svg class="slot" viewBox="0 0 136 160"><rect x="13" y="24" width="110" height="104" rx="4" fill="url(#gg)"/><circle cx="68" cy="76" r="45" fill="#252525"/><circle cx="68" cy="76" r="36" fill="none" stroke="#bbb" stroke-width="6" stroke-dasharray="3.500 2.780"/><circle cx="68" cy="76" r="31" fill="#444" stroke="#bdbdbd" stroke-width="7"/><path d="M68 76h30M68 76 53 50M68 76l-15 26" stroke="#bdbdbd" stroke-width="7"/><circle cx="68" cy="76" r="5" fill="#888"/></svg>
<svg class="slot" viewBox="0 0 136 160"><rect x="14" y="28" width="108" height="95" rx="4" fill="#0b0b0b" stroke="#aaa" stroke-width="2"/><path d="M21 35h94v81H21z" fill="#252525"/><path d="M27 43l15 6.500L27 56" fill="none" stroke="#fff" stroke-width="3.500"/><path d="M43 61h15" stroke="#fff" stroke-width="3.500"/></svg>
<svg class="slot" viewBox="0 0 136 160"><circle cx="68" cy="76" r="56" fill="#1ed760"/><g fill="none" stroke="#191414" stroke-linecap="round"><path d="M36 57q36-10 68 9" stroke-width="11"/><path d="M38 76q32-9 58 8" stroke-width="9"/><path d="M40 94q27-8 49 7" stroke-width="7"/></g></svg>
<div class="sep"><i></i></div>
<svg class="slot" viewBox="0 0 136 160"><rect x="16" y="24" width="104" height="103" rx="22" fill="#fff"/><path d="M69 36c-24 0-41 17-41 40 0 12 5 22 13 29v13l13-7q8 3 15 3c24 0 41-16 41-38S93 36 69 36z" fill="url(#gm)"/><path d="M44 90l20-24 12 10 18-12-20 23-12-9z" fill="#fff" stroke="#fff" stroke-width="4" stroke-linejoin="round"/></svg>
<svg class="slot" viewBox="0 0 136 160"><rect x="9" y="18" width="118" height="112" rx="50" fill="url(#go)"/><rect x="25" y="53" width="84" height="44" rx="22" fill="#0a6bc8" stroke="#fff" stroke-width="11"/></svg>
<svg class="slot" viewBox="0 0 136 160"><rect x="12" y="19" width="113" height="114" rx="28" fill="url(#gz)"/><path d="M34 56h36q13 0 13 12v27H48q-13 0-13-12V56z" fill="#fff"/><path d="M86 71l17-14v38l-17-13z" fill="#fff"/><circle cx="68" cy="152" r="4" fill="#9b9b9b"/></svg>
<div class="sep"><i></i></div>
<svg class="slot" viewBox="0 0 136 160"><path d="M9 32q0-3 3-3h32q5 0 7 9h72q4 0 4 4v20H9z" fill="#3e7f9d"/><path d="M9 44h118v75q0 4-4 4H13q-4 0-4-4z" fill="#57acd6"/><circle cx="68" cy="80" r="27" fill="#3a87b0"/><path d="M62 66h12v16h9l-15 16-15-16h9z" fill="#5fb2da"/><path d="M9 113h118M9 117h118" stroke="#3d8ab4"/></svg>
<svg class="slot" viewBox="0 0 136 160"><path d="M22 32q45 18 91 0l-10 88q-4 13-35 13t-35-13z" fill="url(#gt)"/><ellipse cx="67.500" cy="31" rx="45" ry="10" fill="#45484b" stroke="#85888a" stroke-width="2.500"/></svg>
</footer>
<script src="https://cdn.jsdelivr.net/npm/bootstrap@5.3.0/dist/js/bootstrap.bundle.min.js"></script>
<script>
// Set each label to its column width: letter-spacing, or horizontal scale for .squash
document.querySelectorAll('[data-w]').forEach(function (el) {
  var want = +el.dataset.w;
  el.style.width = 'max-content';
  var have = el.getBoundingClientRect().width, n = Array.from(el.textContent).length;
  if (el.classList.contains('squash')) el.style.transform = 'scaleX(' + want / have + ')';
  else el.style.letterSpacing = (want - have) / n + 'px';
  el.style.width = want + 'px';
});
</script>
</body>
</html>
